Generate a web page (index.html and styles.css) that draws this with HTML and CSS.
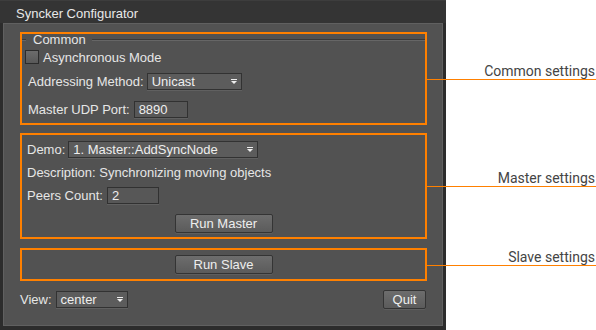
FILE: index.html
```html
<!DOCTYPE html>
<html>
<head>
<meta charset="utf-8">
<link rel="stylesheet" href="styles.css">
</head>
<body>
<div class="page">
  <div class="window">
    <div class="titlebar">Syncker Configurator</div>
    <div class="panel">
      <section class="zone zone-common">
        <div class="legend"><span class="dash"></span><span class="legend-text">Common</span><span class="rule"></span></div>
        <label class="check"><span class="box"></span>Asynchronous Mode</label>
        <div class="row row-addr">Addressing Method:<span class="combo combo-addr">Unicast<svg class="arrow" width="6" height="5" viewBox="0 0 6 5"><rect x="0" y="0" width="6" height="1" fill="#eee"/><path d="M0 2 L6 2 L3 5 Z" fill="#eee"/></svg></span></div>
        <div class="row row-port">Master UDP Port:<span class="field field-port">8890</span></div>
        <div class="callout"><span>Common settings</span></div>
      </section>
      <section class="zone zone-master">
        <div class="row">Demo:<span class="combo combo-demo">1. Master::AddSyncNode<svg class="arrow" width="6" height="5" viewBox="0 0 6 5"><rect x="0" y="0" width="6" height="1" fill="#eee"/><path d="M0 2 L6 2 L3 5 Z" fill="#eee"/></svg></span></div>
        <div class="desc">Description: Synchronizing moving objects</div>
        <div class="row row-peers">Peers Count:<span class="field field-peers">2</span></div>
        <div class="center"><span class="btn btn-wide">Run Master</span></div>
        <div class="callout"><span>Master settings</span></div>
      </section>
      <section class="zone zone-slave">
        <div class="center"><span class="btn btn-wide">Run Slave</span></div>
        <div class="callout"><span>Slave settings</span></div>
      </section>
      <div class="footer">
        <div class="row">View:<span class="combo combo-view">center<svg class="arrow" width="6" height="5" viewBox="0 0 6 5"><rect x="0" y="0" width="6" height="1" fill="#eee"/><path d="M0 2 L6 2 L3 5 Z" fill="#eee"/></svg></span></div>
        <span class="btn btn-quit">Quit</span>
      </div>
    </div>
  </div>
</div>
</body>
</html>
```
FILE: styles.css
```css
html, body {
  margin: 0;
  padding: 0;
  background: #ffffff;
}
.page {
  width: 596px;
  height: 330px;
  overflow: hidden;
  display: flex;
  font-family: "Liberation Sans", Arial, sans-serif;
  font-size: 13px;
}
.window {
  width: 446px;
  height: 330px;
  box-sizing: border-box;
  background: #2c2c2c;
  border-top: 1px solid #3d3d3d;
  padding: 0 3px 4px 3px;
  display: flex;
  flex-direction: column;
}
.titlebar {
  height: 22px;
  box-sizing: border-box;
  margin: 0 -3px;
  padding: 4px 0 0 16px;
  line-height: 18px;
  background: #343434;
  color: #e8e8e8;
}
.panel {
  flex: 1;
  background: #525252;
  border: 1px solid #606060;
  padding: 8px 15px 0 16px;
  display: flex;
  flex-direction: column;
  color: #e6e6e6;
}
.zone {
  position: relative;
  border: 2px solid #ff8000;
  display: flex;
  flex-direction: column;
}
.zone-common {
  height: 89px;
  padding: 0;
}
.zone-master {
  margin-top: 8px;
  height: 96px;
  padding: 6px 0 0 5px;
}
.zone-slave {
  margin-top: 9px;
  height: 24px;
  padding: 5px 0 0 0;
}
.callout {
  position: absolute;
  left: calc(100% + 2px);
  top: 50%;
  width: 169px;
  border-top: 1px solid #ff8000;
}
.callout span {
  position: absolute;
  right: 1px;
  bottom: 1px;
  font-family: Roboto, "Liberation Sans", sans-serif;
  font-size: 14px;
  line-height: 16px;
  color: #444444;
  white-space: nowrap;
}
.legend {
  display: flex;
  align-items: center;
  height: 13px;
  margin-top: -1px;
}
.dash {
  width: 4px;
  height: 0;
  border-top: 1px solid #3a3a3a;
  border-bottom: 1px solid #666;
  margin-top: 1px;
}
.legend-text {
  margin: 0 6px 0 7px;
  line-height: 13px;
}
.rule {
  flex: 1;
  height: 0;
  border-top: 1px solid #3a3a3a;
  border-bottom: 1px solid #666;
  margin-top: 1px;
}
.check {
  display: flex;
  align-items: center;
  margin: 4px 0 0 3px;
  height: 14px;
}
.box {
  width: 12px;
  height: 12px;
  border: 1px solid #2c2c2c;
  background: linear-gradient(#6c6c6c, #595959);
  margin-right: 4px;
}
.row {
  display: flex;
  align-items: center;
  white-space: nowrap;
}
.zone-common .row {
  padding-left: 6px;
}
.row-addr {
  margin-top: 8px;
  height: 18px;
}
.row-port {
  margin-top: 10px;
  height: 18px;
}
.combo {
  display: flex;
  align-items: center;
  justify-content: space-between;
  box-sizing: border-box;
  height: 17px;
  padding: 0 4px 0 4px;
  background: #5c5c5c;
  border: 1px solid #323232;
  box-shadow: 0 1px 0 #606060;
  color: #eeeeee;
}
.arrow {
  display: block;
  flex: none;
}
.combo-addr {
  width: 95px;
  margin-left: 3px;
}
.combo-demo {
  width: 190px;
  margin-left: 3px;
}
.combo-view {
  width: 72px;
  margin-left: 4px;
}
.field {
  display: block;
  box-sizing: border-box;
  height: 17px;
  line-height: 15px;
  padding: 0 4px;
  background: #575757;
  border: 1px solid #313131;
  box-shadow: 0 1px 0 #606060;
  color: #eeeeee;
}
.field-port {
  width: 54px;
  margin-left: 4px;
}
.field-peers {
  width: 52px;
  margin-left: 4px;
}
.desc {
  margin-top: 7px;
  line-height: 15px;
  white-space: nowrap;
}
.row-peers {
  margin-top: 7px;
  height: 17px;
}
.center {
  display: flex;
  justify-content: center;
}
.zone-master .center {
  margin-top: 10px;
  margin-left: -5px;
}
.btn {
  display: flex;
  align-items: center;
  justify-content: center;
  box-sizing: border-box;
  height: 19px;
  background: linear-gradient(#6d6d6d, #5b5b5b);
  border: 1px solid #343434;
  border-radius: 2px;
  box-shadow: 0 1px 0 #5e5e5e;
  color: #eeeeee;
}
.btn-wide {
  width: 98px;
}
.btn-quit {
  width: 43px;
  margin-right: 1px;
}
.footer {
  margin-top: 9px;
  display: flex;
  justify-content: space-between;
  align-items: flex-start;
  height: 19px;
}
.footer .row {
  height: 17px;
  margin-top: 1px;
}
```
